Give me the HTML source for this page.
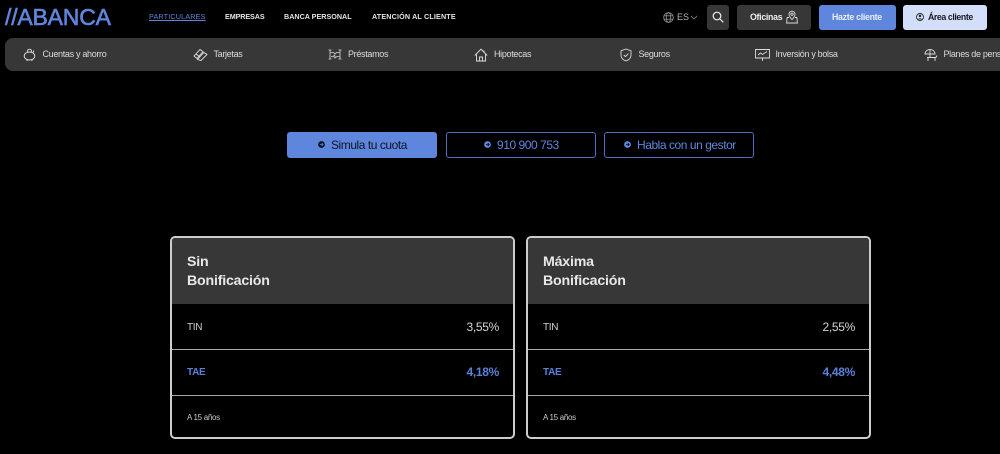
<!DOCTYPE html>
<html lang="es">
<head>
<meta charset="utf-8">
<title>ABANCA</title>
<style>
html,body{margin:0;padding:0;background:#000;}
body{width:1000px;height:454px;position:relative;overflow:hidden;font-family:"Liberation Sans",sans-serif;color:#eee;}
.t{position:absolute;white-space:nowrap;line-height:1;}
.b{position:absolute;box-sizing:border-box;}
svg{position:absolute;overflow:visible;fill:none;}
.m{font-size:7.2px;font-weight:700;top:13px;color:#e4e4e4;letter-spacing:0;}
.n{font-size:9px;top:50px;color:#dcdcdc;letter-spacing:-.32px;}
.cta{font-size:12px;top:139px;letter-spacing:-.45px;}
.card{position:absolute;top:236px;width:345px;height:203px;box-sizing:border-box;border:2px solid #cdcdcd;border-radius:5px;overflow:hidden;background:#000;}
.hd{position:absolute;left:0;top:0;right:0;height:66px;background:#373737;}
.ln{position:absolute;left:0;right:0;height:1px;background:#a8a8a8;}
.ttl{position:absolute;left:15px;font-size:14.2px;font-weight:700;color:#e8e8e8;line-height:1;white-space:nowrap;letter-spacing:-.2px;}
.l{position:absolute;left:15px;font-size:10px;color:#cfcfcf;line-height:1;letter-spacing:-.3px;}
.r{position:absolute;right:14px;font-size:12px;color:#d4d4d4;line-height:1;letter-spacing:-.3px;}
.bl{color:#5b80d6;font-weight:700;}
.s{position:absolute;left:15px;top:175.5px;font-size:8px;color:#c8c8c8;line-height:1;letter-spacing:-.3px;}
</style>
</head>
<body>

<div class="t" style="left:5px;top:6px;font-size:23px;font-weight:400;color:#5f86dd;letter-spacing:-.2px;-webkit-text-stroke:.6px #5f86dd;">//ABANCA</div>

<div class="t m" style="left:149px;color:#5f86dd;text-decoration:underline;font-weight:400;letter-spacing:.18px;">PARTICULARES</div>
<div class="t m" style="left:225px;letter-spacing:-.1px;">EMPRESAS</div>
<div class="t m" style="left:284px;">BANCA PERSONAL</div>
<div class="t m" style="left:372px;letter-spacing:.15px;">ATENCIÓN AL CLIENTE</div>

<svg style="left:663px;top:12px" width="11" height="11" viewBox="0 0 11 11" stroke="#888" stroke-width=".9"><circle cx="5.5" cy="5.5" r="4.8"/><ellipse cx="5.5" cy="5.5" rx="2.2" ry="4.8"/><path d="M1 3.8h9M1 7.2h9"/></svg>
<div class="t" style="left:677px;top:13px;font-size:9px;color:#b5b5b5;">ES</div>
<svg style="left:690px;top:15px" width="8" height="5" viewBox="0 0 8 5" stroke="#777" stroke-width=".9"><path d="M1 1l3 3 3-3"/></svg>

<div class="b" style="left:707px;top:5px;width:22px;height:24.5px;background:#373737;border-radius:3px;"></div>
<svg style="left:712px;top:11px" width="12" height="12" viewBox="0 0 12 12" stroke="#f0f0f0" stroke-width="1.2"><circle cx="5" cy="5" r="3.8"/><path d="M8 8l3.3 3.3"/></svg>

<div class="b" style="left:737px;top:5px;width:74px;height:24.5px;background:#373737;border-radius:3px;"></div>
<div class="t" style="left:750px;top:12.5px;font-size:8.8px;font-weight:700;color:#eee;letter-spacing:-.3px;">Oficinas</div>
<svg style="left:786px;top:10px" width="12" height="14" viewBox="0 0 12 14" stroke="#ddd" stroke-width=".9"><path d="M6 9.5C4 7.5 3 6 3 4.2a3 3 0 0 1 6 0C9 6 8 7.5 6 9.5z"/><circle cx="6" cy="4.2" r="1.1"/><path d="M3 7.5H1.2L.6 13h10.8l-.6-5.5H9"/></svg>

<div class="b" style="left:819px;top:4.5px;width:76.5px;height:25px;background:#5f86dd;border-radius:3px;"></div>
<div class="t" style="left:832px;top:12.5px;font-size:8.8px;font-weight:700;color:#e8eefc;letter-spacing:-.3px;">Hazte cliente</div>

<div class="b" style="left:903px;top:4.5px;width:84px;height:25px;background:#d3defa;border-radius:3px;"></div>
<svg style="left:916px;top:13px" width="8" height="8" viewBox="0 0 8 8"><circle cx="4" cy="4" r="3.5" stroke="#222" stroke-width=".9"/><circle cx="4" cy="3" r="1.2" fill="#222"/><path d="M1.8 6.3c.6-1.3 3.8-1.3 4.4 0z" fill="#222"/></svg>
<div class="t" style="left:928px;top:12.5px;font-size:8.8px;font-weight:700;color:#1b1b22;letter-spacing:-.42px;">Área cliente</div>

<div class="b" style="left:5px;top:38px;width:1010px;height:33px;background:#373737;border-radius:8px;"></div>

<svg style="left:23px;top:48px" width="13" height="14" viewBox="0 0 13 14" stroke="#e0e0e0" stroke-width=".9"><ellipse cx="6.5" cy="8" rx="5.3" ry="4"/><path d="M4 11.5V13M9 11.5V13M4.5 4.2C4 2.5 5 1.2 6.5 1.2S9 2.5 8.5 4.2M11 2.5l-1 2"/></svg>
<div class="t n" style="left:42.5px;">Cuentas y ahorro</div>

<svg style="left:193px;top:48px" width="15" height="13" viewBox="0 0 15 13" stroke="#e0e0e0" stroke-width=".9"><path d="M1 8l6-6.500 3 2.200-6 6.800z"/><path d="M4.500 11.500L10.800 4.500 14 6.500 8 12.500z"/><path d="M3 6l4 3"/></svg>
<div class="t n" style="left:213.5px;">Tarjetas</div>

<svg style="left:328px;top:49px" width="14" height="11" viewBox="0 0 14 11" stroke="#d8d8d8" stroke-width=".8"><path d="M.5 1h3M.5 10h3M10.5 1h3M10.5 10h3M2 1v9M12 1v9"/><path d="M2.5 3.500h3L7 5l1.500-1.500h3M3 7.500h2.500L7 9l2-1.500h2.500M5.500 6l2 1.500"/></svg>
<div class="t n" style="left:348px;">Préstamos</div>

<svg style="left:474px;top:48px" width="14" height="14" viewBox="0 0 14 14" stroke="#e0e0e0" stroke-width=".9"><path d="M.8 7.500L7 1.200l6.200 6.300M2.500 6.500V13h9V6.500M5.500 13V9h3v4M10 2.500v2"/></svg>
<div class="t n" style="left:494px;">Hipotecas</div>

<svg style="left:620px;top:48px" width="12" height="14" viewBox="0 0 12 14" stroke="#dcdcdc" stroke-width=".9"><path d="M6 1l5 1.800V7c0 3-2.200 5-5 6-2.800-1-5-3-5-6V2.800z"/><path d="M3.800 7l1.600 1.600 3-3"/></svg>
<div class="t n" style="left:638.5px;">Seguros</div>

<svg style="left:755px;top:48px" width="15" height="14" viewBox="0 0 15 14" stroke="#dcdcdc" stroke-width=".9"><path d="M.5 1.500h14v8.500H.5zM7.500 10v3M3 7l2.500-2 2 1.500L12 3.500"/></svg>
<div class="t n" style="left:775.5px;">Inversión y bolsa</div>

<svg style="left:924px;top:48px" width="14" height="14" viewBox="0 0 14 14" stroke="#dcdcdc" stroke-width=".9"><path d="M1 6a5 4.500 0 0 1 10 0zM6 1.500V9"/><path d="M3 9.500h9M4 9.500v3.500M11 9.500v3.500M13 7.500l-1 2"/></svg>
<div class="t n" style="left:943.5px;">Planes de pensiones</div>

<div class="b" style="left:287px;top:132px;width:150px;height:25.5px;background:#5f86dd;border-radius:3px;"></div>
<svg style="left:318px;top:141px" width="7" height="7" viewBox="0 0 7 7"><circle cx="3.5" cy="3.5" r="3.4" fill="#0c1428"/><path d="M2 3.5h3M3.7 2l1.400 1.500-1.400 1.500" stroke="#5f86dd" stroke-width=".8"/></svg>
<div class="t cta" style="left:331px;color:#0c1428;">Simula tu cuota</div>

<div class="b" style="left:445.5px;top:132px;width:150px;height:25.5px;border:1px solid #4f6fbe;border-radius:3px;"></div>
<svg style="left:484px;top:141px" width="7" height="7" viewBox="0 0 7 7"><circle cx="3.5" cy="3.5" r="3.4" fill="#5f86dd"/><path d="M2 3.5h3M3.7 2l1.400 1.500-1.400 1.500" stroke="#000" stroke-width=".8"/></svg>
<div class="t cta" style="left:497px;color:#5f86dd;">910 900 753</div>

<div class="b" style="left:604px;top:132px;width:150px;height:25.5px;border:1px solid #4f6fbe;border-radius:3px;"></div>
<svg style="left:624px;top:141px" width="7" height="7" viewBox="0 0 7 7"><circle cx="3.5" cy="3.5" r="3.4" fill="#5f86dd"/><path d="M2 3.5h3M3.7 2l1.400 1.500-1.400 1.500" stroke="#000" stroke-width=".8"/></svg>
<div class="t cta" style="left:637px;color:#5f86dd;">Habla con un gestor</div>

<div class="card" style="left:170px;">
  <div class="hd"></div>
  <div class="ttl" style="top:16.5px;">Sin</div>
  <div class="ttl" style="top:35.5px;">Bonificación</div>
  <div class="l" style="top:84.5px;">TIN</div>
  <div class="r" style="top:83px;">3,55%</div>
  <div class="ln" style="top:111px;"></div>
  <div class="l bl" style="top:130px;">TAE</div>
  <div class="r bl" style="top:128px;">4,18%</div>
  <div class="ln" style="top:157px;"></div>
  <div class="s">A 15 años</div>
</div>

<div class="card" style="left:526px;">
  <div class="hd"></div>
  <div class="ttl" style="top:16.5px;">Máxima</div>
  <div class="ttl" style="top:35.5px;">Bonificación</div>
  <div class="l" style="top:84.5px;">TIN</div>
  <div class="r" style="top:83px;">2,55%</div>
  <div class="ln" style="top:111px;"></div>
  <div class="l bl" style="top:130px;">TAE</div>
  <div class="r bl" style="top:128px;">4,48%</div>
  <div class="ln" style="top:157px;"></div>
  <div class="s">A 15 años</div>
</div>

</body>
</html>
